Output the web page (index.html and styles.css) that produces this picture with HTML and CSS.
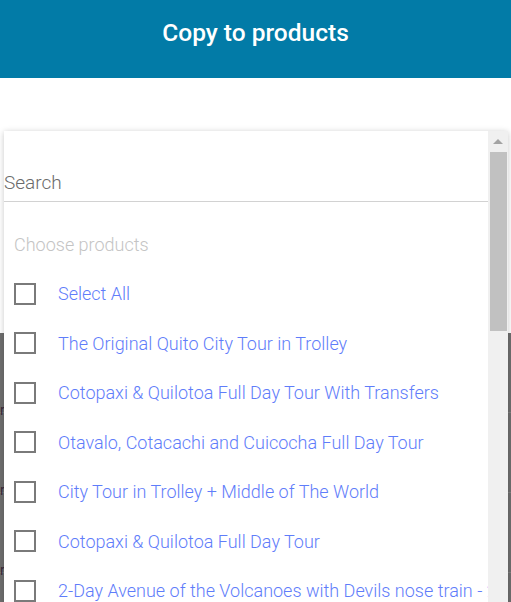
FILE: index.html
```html
<!DOCTYPE html>
<html lang="en">
<head>
<meta charset="utf-8">
<title>Copy to products</title>
<link rel="stylesheet" href="styles.css">
</head>
<body>
<div class="page">
  <header class="topbar">
    <h1 class="title">Copy to products</h1>
  </header>
  <div class="blank"></div>
  <div class="backdrop">
    <div class="bg-row"><span class="bg-frag">r</span></div>
    <div class="bg-row"><span class="bg-frag">r</span></div>
    <div class="bg-row"><span class="bg-frag">r</span></div>
  </div>

  <div class="dropdown">
    <div class="dropdown-body">
      <div class="search">Search</div>
      <div class="hint">Choose products</div>
      <ul class="options">
        <li class="option"><span class="box"></span><span class="label">Select All</span></li>
        <li class="option"><span class="box"></span><span class="label">The Original Quito City Tour in Trolley</span></li>
        <li class="option"><span class="box"></span><span class="label">Cotopaxi &amp; Quilotoa Full Day Tour With Transfers</span></li>
        <li class="option"><span class="box"></span><span class="label">Otavalo, Cotacachi and Cuicocha Full Day Tour</span></li>
        <li class="option"><span class="box"></span><span class="label">City Tour in Trolley + Middle of The World</span></li>
        <li class="option"><span class="box"></span><span class="label">Cotopaxi &amp; Quilotoa Full Day Tour</span></li>
        <li class="option"><span class="box"></span><span class="label">2-Day Avenue of the Volcanoes with Devils nose train - 2 Days</span></li>
      </ul>
    </div>
    <div class="scrollbar">
      <div class="arrow"></div>
      <div class="thumb"></div>
    </div>
  </div>
</div>
</body>
</html>
```

FILE: styles.css
```css
* { box-sizing: border-box; }
html, body { margin: 0; padding: 0; }
body {
  font-family: Roboto, "Noto Sans", "Liberation Sans", sans-serif;
  background: #fff;
  overflow: hidden;
}
.page {
  position: relative;
  width: 511px;
  height: 602px;
  display: flex;
  flex-direction: column;
  overflow: hidden;
}
.topbar {
  height: 78px;
  flex: none;
  background: #027ba7;
  display: flex;
  justify-content: center;
  padding-top: 18px;
}
.title {
  margin: 0;
  color: #fff;
  font-size: 24.5px;
  font-weight: 500;
  line-height: 30px;
}
.blank {
  height: 255px;
  flex: none;
  background: #fff;
}
.backdrop {
  flex: 1;
  background: #6f6f6f;
  display: flex;
  flex-direction: column;
}
.bg-row {
  height: 80px;
  border-bottom: 1px solid #828282;
  display: flex;
  align-items: center;
  padding-top: 74px;
}
.bg-frag {
  color: #3a2a3a;
  font-size: 14px;
}
.dropdown {
  position: absolute;
  top: 131px;
  left: 4px;
  width: 504px;
  height: 480px;
  background: #fff;
  box-shadow: 0 1px 6px rgba(0, 0, 0, 0.22);
  display: flex;
}
.dropdown-body {
  width: 484px;
  flex: none;
  overflow: hidden;
  padding-top: 34px;
}
.search {
  height: 37px;
  line-height: 35px;
  font-size: 19px;
  font-weight: 300;
  color: #6b6b6b;
  border-bottom: 1px solid #d2d2d2;
}
.hint {
  margin-top: 30px;
  padding-left: 10px;
  line-height: 26px;
  font-size: 18px;
  font-weight: 300;
  color: #c4c4c4;
}
.options {
  list-style: none;
  margin: 11px 0 0;
  padding: 0 0 0 10px;
}
.option {
  height: 49.5px;
  display: flex;
  align-items: center;
  white-space: nowrap;
}
.box {
  flex: none;
  width: 22px;
  height: 22px;
  border: 2px solid #7a7a7a;
  margin-right: 22px;
}
.label {
  font-size: 18px;
  font-weight: 300;
  color: #5f7dfa;
}
.scrollbar {
  width: 20px;
  flex: none;
  background: #f0f0f0;
  display: flex;
  flex-direction: column;
  align-items: center;
}
.arrow {
  margin-top: 8px;
  width: 0;
  height: 0;
  border-left: 5px solid transparent;
  border-right: 5px solid transparent;
  border-bottom: 5px solid #a3a3a3;
}
.thumb {
  margin-top: 8px;
  width: 17px;
  height: 179px;
  background: #c1c1c1;
}
```
